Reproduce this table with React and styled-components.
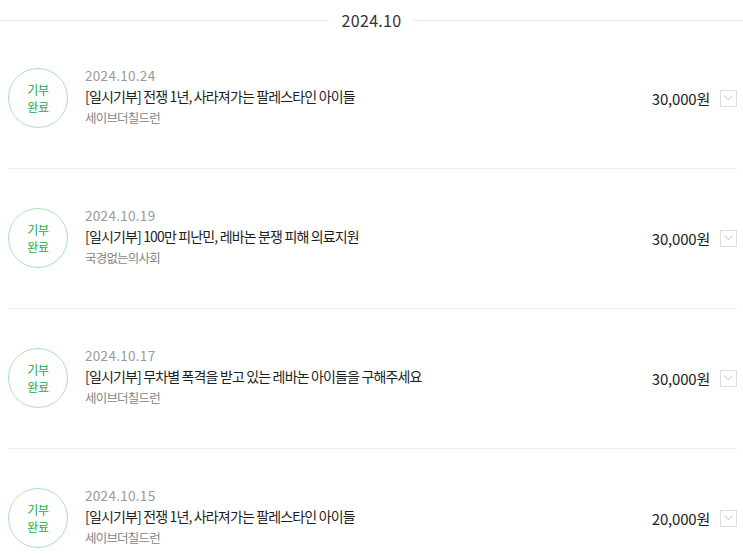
import React from "react";
import styled, { createGlobalStyle } from "styled-components";

const Global = createGlobalStyle`
  html, body { margin: 0; padding: 0; background: #fff; }
  body { font-family: "Noto Sans CJK KR", "Noto Sans", sans-serif; }
`;

const Page = styled.div`
  width: 743px;
  overflow: hidden;
`;

const MonthHeader = styled.div`
  display: flex;
  align-items: center;
  gap: 13px;
  padding: 12px 0 1px;
  &::before, &::after {
    content: "";
    flex: 1;
    height: 1px;
    background: #e6e6e6;
  }
`;

const MonthLabel = styled.span`
  font-size: 16px;
  line-height: 16px;
  color: #333;
  letter-spacing: 0.3px;
`;

const List = styled.ul`
  list-style: none;
  margin: 0;
  padding: 0 6px 0 8px;
`;

const Row = styled.li`
  display: flex;
  align-items: center;
  padding: 39px 0 40px;
  border-bottom: 1px solid #f0f0f0;
`;

const Badge = styled.div`
  width: 58px;
  height: 58px;
  flex: none;
  border: 1px solid #a9e4b3;
  border-radius: 50%;
  display: flex;
  flex-direction: column;
  align-items: center;
  justify-content: center;
  color: #18ad3b;
`;

const BadgeLine = styled.span`
  display: block;
  font-size: 12px;
  line-height: 17.5px;
  letter-spacing: -0.3px;
`;

const Info = styled.div`
  flex: 1;
  margin-left: 17px;
  display: flex;
  flex-direction: column;
  margin-top: -4px;
`;

const DateText = styled.div`
  font-size: 13.5px;
  line-height: 21px;
  color: #9a9a9a;
  letter-spacing: 0.3px;
`;

const Title = styled.div`
  font-size: 14px;
  line-height: 21px;
  color: #1e1e1e;
  letter-spacing: -0.85px;
`;

const Org = styled.div`
  font-size: 12.5px;
  line-height: 21px;
  color: #858585;
  letter-spacing: -0.8px;
`;

const Amount = styled.div`
  font-size: 15px;
  color: #1e1e1e;
  letter-spacing: -0.2px;
`;

const Toggle = styled.button`
  width: 17px;
  height: 17px;
  margin-left: 10px;
  padding: 0;
  border: 1px solid #dedede;
  background: #fff;
  display: flex;
  align-items: center;
  justify-content: center;
  flex: none;
`;

const items = [
  { date: "2024.10.24", title: "[일시기부] 전쟁 1년, 사라져가는 팔레스타인 아이들", org: "세이브더칠드런", amount: "30,000원" },
  { date: "2024.10.19", title: "[일시기부] 100만 피난민, 레바논 분쟁 피해 의료지원", org: "국경없는의사회", amount: "30,000원" },
  { date: "2024.10.17", title: "[일시기부] 무차별 폭격을 받고 있는 레바논 아이들을 구해주세요", org: "세이브더칠드런", amount: "30,000원" },
  { date: "2024.10.15", title: "[일시기부] 전쟁 1년, 사라져가는 팔레스타인 아이들", org: "세이브더칠드런", amount: "20,000원" },
];

export default function App() {
  return (
    <Page>
      <Global />
      <MonthHeader>
        <MonthLabel>2024.10</MonthLabel>
      </MonthHeader>
      <List>
        {items.map((it, i) => (
          <Row key={i}>
            <Badge>
              <BadgeLine>기부</BadgeLine>
              <BadgeLine>완료</BadgeLine>
            </Badge>
            <Info>
              <DateText>{it.date}</DateText>
              <Title>{it.title}</Title>
              <Org>{it.org}</Org>
            </Info>
            <Amount>{it.amount}</Amount>
            <Toggle aria-label="펼치기">
              <svg width="9" height="6" viewBox="0 0 9 6">
                <path d="M0.5 0.8 L4.5 4.8 L8.5 0.8" fill="none" stroke="#bdbdbd" strokeWidth="1" />
              </svg>
            </Toggle>
          </Row>
        ))}
      </List>
    </Page>
  );
}
